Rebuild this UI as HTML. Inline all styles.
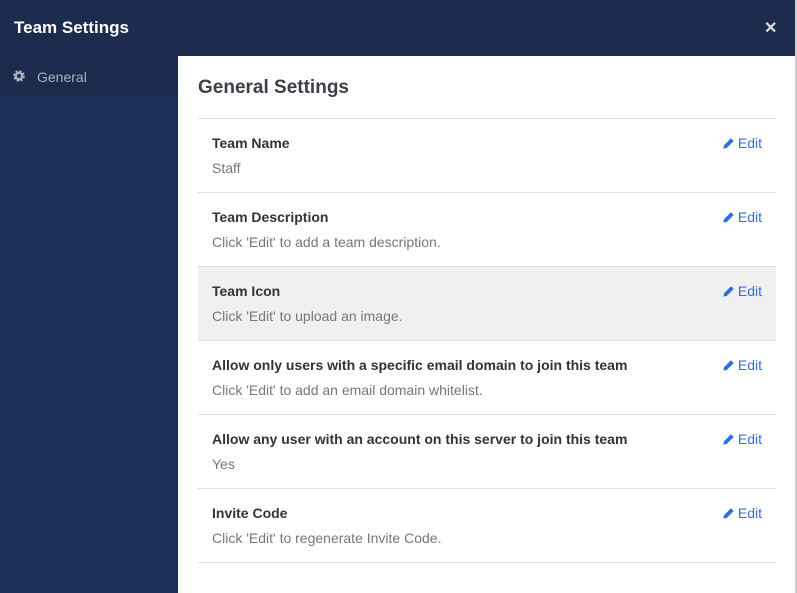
<!DOCTYPE html>
<html><head><style>
*{margin:0;padding:0;box-sizing:border-box}
body{width:797px;height:593px;background:#fff;font-family:"Liberation Sans",sans-serif;position:relative;overflow:hidden}
.hdr{position:absolute;left:0;top:0;width:795px;height:56px;background:#1c2b4e;color:#fff}
.hdr h1{position:absolute;left:14px;top:18px;font-size:17px;font-weight:bold}
.x{position:absolute;left:764px;top:18px;font-size:16px;color:#ddd;font-weight:bold}
.side{position:absolute;left:0;top:56px;width:178px;height:537px;background:#1f3058}
.sel{position:absolute;left:0;top:0;width:178px;height:39px;background:#1c2a4e;color:#aab2c4;font-size:14px}
.sel span{position:absolute;left:37px;top:13px}
.sel svg{position:absolute;left:13px;top:14px}
.edge{position:absolute;left:795px;top:0;width:2px;height:593px;background:#ccc}
h2{position:absolute;left:198px;top:77px;font-size:19px;color:#3d3e48;font-weight:bold}
.row{position:absolute;left:198px;width:578px;height:74px;border-top:1px solid #ddd}
.row b{position:absolute;left:14px;top:16px;font-size:14px;color:#333;font-weight:bold}
.row p{position:absolute;left:14px;top:41px;font-size:14px;color:#777}
.row .e{position:absolute;right:14px;top:16px;font-size:14px;color:#2f6fdc}
.e svg{vertical-align:-1px;margin-right:4px}
</style></head><body>
<div class="hdr"><h1>Team Settings</h1><div class="x">✕</div></div>
<div class="side"><div class="sel"><svg width="12" height="12" viewBox="0 0 12 12"><circle cx="6" cy="6" r="4.3" fill="none" stroke="#aab2c4" stroke-width="3" stroke-dasharray="2 1.4"/><circle cx="6" cy="6" r="3.2" fill="none" stroke="#aab2c4" stroke-width="2.4"/></svg><span>General</span></div></div>
<h2>General Settings</h2>
<div class="row" style="top:118px"><b>Team Name</b><p>Staff</p><div class="e"><svg width="11" height="11" viewBox="0 0 11 11"><path d="M1 10l.5-2.5L8 1l2 2-6.5 6.5z" fill="#2f6fdc" stroke="#2f6fdc" stroke-width="1"/></svg>Edit</div></div>
<div class="row" style="top:192px"><b>Team Description</b><p>Click 'Edit' to add a team description.</p><div class="e"><svg width="11" height="11" viewBox="0 0 11 11"><path d="M1 10l.5-2.5L8 1l2 2-6.5 6.5z" fill="#2f6fdc" stroke="#2f6fdc" stroke-width="1"/></svg>Edit</div></div>
<div class="row" style="top:266px;background:#f0f0f0"><b>Team Icon</b><p>Click 'Edit' to upload an image.</p><div class="e"><svg width="11" height="11" viewBox="0 0 11 11"><path d="M1 10l.5-2.5L8 1l2 2-6.5 6.5z" fill="#2f6fdc" stroke="#2f6fdc" stroke-width="1"/></svg>Edit</div></div>
<div class="row" style="top:340px"><b>Allow only users with a specific email domain to join this team</b><p>Click 'Edit' to add an email domain whitelist.</p><div class="e"><svg width="11" height="11" viewBox="0 0 11 11"><path d="M1 10l.5-2.5L8 1l2 2-6.5 6.5z" fill="#2f6fdc" stroke="#2f6fdc" stroke-width="1"/></svg>Edit</div></div>
<div class="row" style="top:414px"><b>Allow any user with an account on this server to join this team</b><p>Yes</p><div class="e"><svg width="11" height="11" viewBox="0 0 11 11"><path d="M1 10l.5-2.5L8 1l2 2-6.5 6.5z" fill="#2f6fdc" stroke="#2f6fdc" stroke-width="1"/></svg>Edit</div></div>
<div class="row" style="top:488px;border-bottom:1px solid #ddd;height:75px"><b>Invite Code</b><p>Click 'Edit' to regenerate Invite Code.</p><div class="e"><svg width="11" height="11" viewBox="0 0 11 11"><path d="M1 10l.5-2.5L8 1l2 2-6.5 6.5z" fill="#2f6fdc" stroke="#2f6fdc" stroke-width="1"/></svg>Edit</div></div>
<div class="edge"></div>
</body></html>
